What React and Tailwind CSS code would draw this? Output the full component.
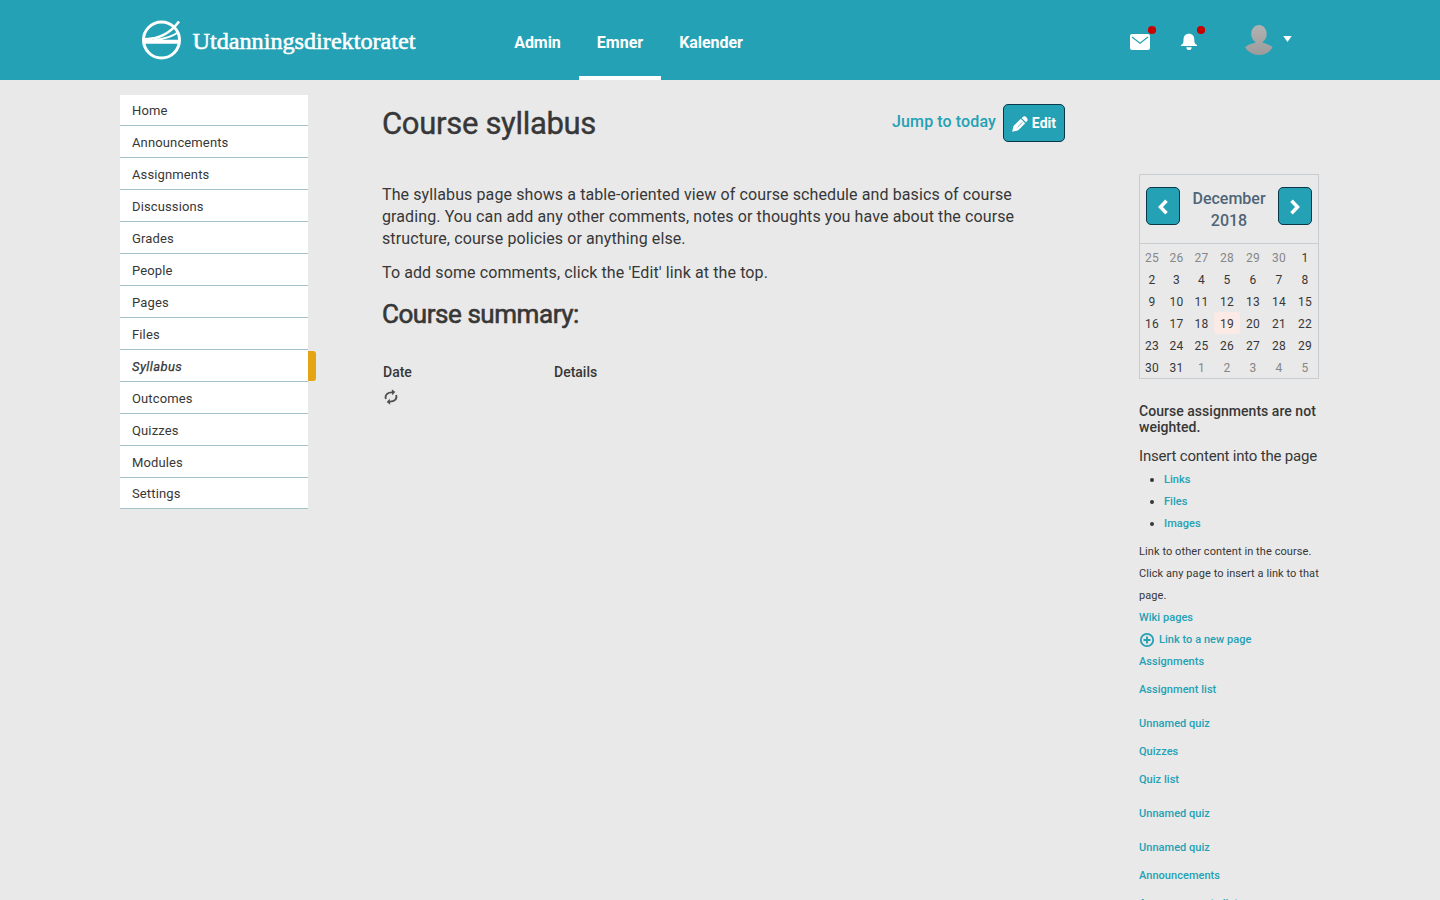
const menu = ['Home', 'Announcements', 'Assignments', 'Discussions', 'Grades', 'People', 'Pages', 'Files', 'Syllabus', 'Outcomes', 'Quizzes', 'Modules', 'Settings'];

const weeks = [
  [25, 26, 27, 28, 29, 30, 1],
  [2, 3, 4, 5, 6, 7, 8],
  [9, 10, 11, 12, 13, 14, 15],
  [16, 17, 18, 19, 20, 21, 22],
  [23, 24, 25, 26, 27, 28, 29],
  [30, 31, 1, 2, 3, 4, 5],
];

function Logo() {
  return (
    <svg width="280" height="46" viewBox="0 0 280 46" className="block">
      <g fill="none" stroke="#fff">
        <circle cx="21.5" cy="23" r="18" strokeWidth="3" />
        <path d="M4 24.8H39" strokeWidth="4" />
        <path d="M5 22.3C20 22 30 16.500 39 4.500" strokeWidth="2.700" />
        <path d="M14 23C25 22 32 20 38.500 15" strokeWidth="1.900" />
      </g>
      <text x="52.5" y="31.5" fill="#fff" stroke="#fff" strokeWidth="0.55" fontSize="24" textLength="223" lengthAdjust="spacingAndGlyphs" fontFamily="'Liberation Serif', serif">Utdanningsdirektoratet</text>
    </svg>
  );
}

function Header() {
  return (
    <header className="flex h-20 bg-[#24a1b4] text-white">
      <div className="w-[496px] shrink-0 pt-[17px] pl-[140px]"><Logo /></div>
      <nav className="flex text-[16px] leading-[20px] font-bold">
        <a className="h-20 w-[83px] pt-[33px] text-center tracking-[-0.050px]">Admin</a>
        <a className="h-20 w-[82px] border-b-4 border-white pt-[33px] text-center">Emner</a>
        <a className="h-20 w-[100px] pt-[33px] text-center tracking-[-0.050px]">Kalender</a>
      </nav>
      <div className="ml-auto flex w-[311px] pt-[24px]">
        <svg width="30" height="28" viewBox="0 0 30 28" className="shrink-0">
          <rect x="1" y="10" width="20" height="16" rx="2" fill="#fff" />
          <path d="M3 13l8 6.2L19 13" fill="none" stroke="#24a1b4" strokeWidth="1.2" />
          <circle cx="23" cy="6" r="4.1" fill="#c80000" />
        </svg>
        <svg width="30" height="28" viewBox="0 0 30 28" className="ml-[20px] shrink-0">
          <path d="M4.500 16C4.500 12 6.500 9.800 10 9.800S15.300 12 15.300 16C15.300 19 16 20 18 21V22H2V21C4 20 4.500 19 4.500 16Z" fill="#fff" />
          <path d="M7.200 23.200H12.800C12.500 25.200 11.500 26 10 26S7.500 25.200 7.200 23.200Z" fill="#fff" />
          <circle cx="22" cy="6" r="4.100" fill="#c80000" />
        </svg>
        <svg width="50" height="32" viewBox="0 0 50 32" className="ml-[35px] shrink-0">
          <defs>
            <linearGradient id="av" x1="0" y1="0" x2="0" y2="1" gradientUnits="objectBoundingBox">
              <stop offset="0" stopColor="#b2b2b2" />
              <stop offset="1" stopColor="#9c9c9c" />
            </linearGradient>
          </defs>
          <path d="M15 1C19.500 1 22.700 5 22.700 10C22.700 13.500 21 16.500 18.300 18.200C18.500 19.300 25 19.500 28.500 23.300C26 28 21 31 15 31S4 28 1 23.300C5 19.500 11.300 19.300 11.600 18.200C9 16.500 7.200 13.500 7.200 10C7.200 5 10.500 1 15 1Z" fill="url(#av)" />
          <path d="M39.300 12H47.700L43.500 18Z" fill="#fff" />
        </svg>
      </div>
    </header>
  );
}

function CalButton({ d }) {
  return (
    <button className="flex h-[38px] w-[34px] shrink-0 items-center justify-center rounded-[5px] border border-[#0a3848] bg-[#24a1b4]">
      <svg width="12" height="16" viewBox="0 0 12 16" className="mt-[2px]"><path d={d} fill="none" stroke="#fff" strokeWidth="3.500" /></svg>
    </button>
  );
}

function Calendar() {
  return (
    <div className="h-[205px] w-[180px] border border-[#c7cdd1]">
      <div className="flex h-[69px] justify-between border-b border-[#c7cdd1] px-[6px] pt-[12px]">
        <CalButton d="M9.500 1.800L3.500 8L9.500 14.200" />
        <div className="pt-px text-center text-[16px] leading-[22px] font-medium text-[#4f6577]">December<br />2018</div>
        <CalButton d="M2.500 1.800L8.500 8L2.500 14.200" />
      </div>
      <div className="pt-[2px] text-[12px] leading-[24px]">
        {weeks.map((w, i) => (
          <div key={i} className="grid h-[22px] grid-cols-[24px_25px_25px_26px_26px_26px_26px] text-center tracking-[0.2px]">
            {w.map((d, j) => {
              const other = (i === 0 && d > 20) || (i === 5 && d < 20);
              return <span key={j} className={'h-[22px] ' + (other ? 'text-[#868686]' : d === 19 ? 'rounded-[3px] bg-[#fbeae5]' : '')}>{d}</span>;
            })}
          </div>
        ))}
      </div>
    </div>
  );
}

function Link({ children, className = '' }) {
  return <a className={'block text-[11px] leading-[22px] font-medium tracking-[0.040px] text-[#24a1b4] ' + className}>{children}</a>;
}

function Aside() {
  return (
    <aside className="w-[185px] shrink-0 pt-[94px]">
      <Calendar />
      <p className="mt-[24px] text-[14px] leading-[16px] font-medium tracking-[0.040px]">Course assignments are not<br />weighted.</p>
      <h3 className="mt-[10px] text-[15px] leading-[22px] tracking-[-0.190px] whitespace-nowrap">Insert content into the page</h3>
      <ul className="mt-[1px] list-disc pl-[25px] text-[12px]">
        <li className="h-[22px] leading-[22px]"><Link>Links</Link></li>
        <li className="h-[22px] leading-[22px]"><Link>Files</Link></li>
        <li className="h-[22px] leading-[22px]"><Link>Images</Link></li>
      </ul>
      <p className="mt-[7px] text-[11px] leading-[22px] tracking-[0.080px] whitespace-nowrap">Link to other content in the course.<br />Click any page to insert a link to that<br />page.</p>
      <Link>Wiki pages</Link>
      <div className="flex h-[22px] items-center">
        <svg width="16" height="16" viewBox="0 0 16 16" fill="none" stroke="#24a1b4" className="mr-[4px]">
          <circle cx="8" cy="8" r="6.200" strokeWidth="1.800" />
          <path d="M8 4.500V11.500M4.500 8H11.500" strokeWidth="1.900" />
        </svg>
        <Link>Link to a new page</Link>
      </div>
      <Link>Assignments</Link>
      <Link className="mt-[6px]">Assignment list</Link>
      <Link className="mt-[12px]">Unnamed quiz</Link>
      <Link className="mt-[6px]">Quizzes</Link>
      <Link className="mt-[6px]">Quiz list</Link>
      <Link className="mt-[12px]">Unnamed quiz</Link>
      <Link className="mt-[12px]">Unnamed quiz</Link>
      <Link className="mt-[6px]">Announcements</Link>
      <Link className="mt-[6px]">Announcements list</Link>
    </aside>
  );
}

export default function App() {
  return (
    <div className="h-[900px] w-[1440px] overflow-hidden bg-[#e9e9e9] font-['Roboto',sans-serif] text-[#373737]">
      <Header />
      <div className="flex pl-[120px]">
        <nav className="w-[188px] shrink-0 pt-[15px]">
          {menu.map((m, i) => (
            <a key={m} className={'flex w-[188px] border-b border-[#a5c1ca] bg-white pl-[12px] text-[13px] leading-[32px] ' + (i === 0 || i === 12 ? 'h-[31px]' : 'h-[32px] pt-px') + (m === 'Syllabus' ? ' tracking-[0.400px] italic' : ' tracking-[0.130px]')}>
              <span className={'h-[30px] flex-1' + (m === 'Syllabus' ? ' [-webkit-text-stroke:0.25px_#373737]' : '')}>{m}</span>
              {m === 'Syllabus' && <span className="-mr-2 h-[30px] w-2 shrink-0 rounded-r-[3px] bg-[#e4a413]" />}
            </a>
          ))}
        </nav>
        <main className="ml-[74px] w-[757px] shrink-0">
          <div className="flex w-[683px] pt-[24px]">
            <h1 className="mt-[1px] text-[31px] leading-[38px] font-normal tracking-[-0.310px] [-webkit-text-stroke:0.4px_#373737]">Course syllabus</h1>
            <a className="mt-[7px] ml-auto text-[16px] leading-[22px] font-medium tracking-[0.110px] text-[#24a1b4]">Jump to today</a>
            <button className="ml-[7px] flex h-[38px] w-[62px] items-center justify-center rounded-[5px] border border-[#0a3848] bg-[#24a1b4] text-[14px] font-bold text-white">
              <svg width="16" height="16" viewBox="0 0 16 16" fill="#fff" className="mt-px mr-[4px]">
                <path d="M.2 15.800L1.100 11.200Q1.300 10.200 2 9.500L8.800 2.800L13.200 7.200L6.500 13.900Q5.800 14.600 4.800 14.800Z" />
                <path d="M9.700 2L11 .8C12.100-.2 13.500.2 14.600 1.400S16 4 15.200 5L14 6.300Z" />
                <path d="M5.500 11.200L10.500 6.300" stroke="#24a1b4" strokeWidth=".7" />
              </svg>
              <span className="tracking-[0.050px]">Edit</span>
            </button>
          </div>
          <p className="mt-[41px] text-[16px] leading-[22px] tracking-[0.105px] whitespace-nowrap">The syllabus page shows a table-oriented view of course schedule and basics of course<br />grading. You can add any other comments, notes or thoughts you have about the course<br />structure, course policies or anything else.</p>
          <p className="mt-[12px] text-[16px] leading-[22px] tracking-[0.105px]">To add some comments, click the 'Edit' link at the top.</p>
          <h2 className="mt-[12px] text-[26px] leading-[36px] font-normal tracking-[-0.450px] [-webkit-text-stroke:0.6px_#373737]">Course summary:</h2>
          <div className="mt-[29px] flex pl-px text-[14px] leading-[22px] font-medium">
            <span className="w-[171px]">Date</span>
            <span>Details</span>
          </div>
          <svg width="14" height="16" viewBox="0 0 14 16" className="mt-[6px] ml-[2px]" fill="none" stroke="#505050" strokeWidth="1.900">
            <path d="M1.900 10C.6 6 3.500 3.200 8.500 3.400" />
            <path d="M12.100 6C13.400 10 10.500 12.800 5.500 12.600" />
            <path d="M7.800.2L11.300 3.100L8.200 6.300Z M6.200 15.800L2.700 12.900L5.800 9.700Z" fill="#505050" stroke="none" />
          </svg>
        </main>
        <Aside />
      </div>
    </div>
  );
}
